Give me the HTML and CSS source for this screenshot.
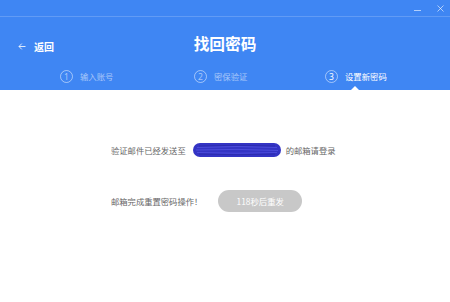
FILE: index.html
```html
<!DOCTYPE html>
<html lang="zh">
<head>
<meta charset="utf-8">
<title>找回密码</title>
<link rel="stylesheet" href="styles.css">
</head>
<body>
<div class="header">
  <div class="titlebar">
    <span class="win-min"></span>
    <svg class="win-close" width="7" height="7" viewBox="0 0 7 7"><path d="M0.5 0.5L6.5 6.5M6.5 0.5L0.5 6.5" stroke="rgba(255,255,255,0.65)" stroke-width="0.9" fill="none"/></svg>
  </div>
  <div class="nav">
    <div class="back">
      <svg class="back-arrow" width="8" height="7" viewBox="0 0 8 7"><path d="M7.5 3.5H1M3.8 0.6L1 3.5L3.8 6.4" stroke="rgba(255,255,255,0.9)" stroke-width="0.9" fill="none"/></svg>
      <span class="back-text">返回</span>
    </div>
    <div class="title">找回密码</div>
    <div></div>
  </div>
  <div class="steps">
    <div class="step"><span class="num">1</span><span class="label">输入账号</span></div>
    <div class="step"><span class="num">2</span><span class="label">密保验证</span></div>
    <div class="step active"><span class="num">3</span><span class="label">设置新密码</span></div>
  </div>
</div>
<div class="content">
  <div class="block">
    <div class="line line1">
      <span>验证邮件已经发送至</span>
      <svg class="mask" width="88" height="14" viewBox="0 0 88 14">
        <rect x="0" y="0" width="88" height="14" rx="7" fill="#3434c4"/>
        <path d="M4 4.5Q44 2.5 84 4.5M3 7Q44 5.5 85 7.5M4 9.5Q44 11 84 9.5" stroke="#5252e0" stroke-width="0.8" fill="none"/>
        <path d="M6 3Q44 1.5 82 3M6 11Q44 12.5 82 11" stroke="#2a2aa8" stroke-width="0.8" fill="none"/>
      </svg>
      <span>的邮箱请登录</span>
    </div>
    <div class="line line2">
      <span>邮箱完成重置密码操作！</span>
      <span class="resend">118秒后重发</span>
    </div>
  </div>
</div>
</body>
</html>
```
FILE: styles.css
```css
* { box-sizing: border-box; }
html, body { margin: 0; padding: 0; }
body {
  width: 450px;
  height: 302px;
  background: #ffffff;
  font-family: "Noto Sans CJK SC", "Microsoft YaHei", sans-serif;
  overflow: hidden;
}
.header {
  background: #3f86f3;
  height: 90px;
  display: flex;
  flex-direction: column;
}
.titlebar {
  height: 17px;
  border-bottom: 1px solid rgba(255,255,255,0.18);
  display: flex;
  justify-content: flex-end;
  align-items: flex-start;
  padding-right: 6px;
}
.win-min {
  width: 7px;
  height: 1px;
  background: rgba(255,255,255,0.6);
  margin-top: 10px;
  margin-right: 16px;
}
.win-close { margin-top: 5px; }
.nav {
  height: 45px;
  display: grid;
  grid-template-columns: 1fr auto 1fr;
}
.back {
  display: flex;
  align-items: center;
  padding-left: 18px;
  padding-top: 22px;
  height: 38px;
  color: #fff;
}
.back-arrow { margin-right: 8px; margin-top: -2px; }
.back-text {
  font-size: 10px;
  font-weight: bold;
  line-height: 14px;
}
.title {
  color: #fff;
  font-size: 15.7px;
  font-weight: bold;
  line-height: 20px;
  padding-top: 17px;
}
.steps {
  height: 28px;
  display: grid;
  grid-template-columns: 134px 131px auto;
  padding-left: 60px;
}
.step {
  display: flex;
  align-items: center;
  position: relative;
  color: rgba(255,255,255,0.55);
}
.num {
  width: 13px;
  height: 13px;
  border: 1px solid rgba(255,255,255,0.5);
  border-radius: 50%;
  font-size: 8.5px;
  line-height: 11px;
  text-align: center;
  margin-right: 7px;
  font-family: "Noto Sans", sans-serif;
}
.label {
  font-size: 8.4px;
  line-height: 12px;
}
.step.active { color: #fff; }
.step.active::after {
  content: "";
  position: absolute;
  bottom: 0;
  left: 26px;
  border-left: 4px solid transparent;
  border-right: 4px solid transparent;
  border-bottom: 4px solid #fff;
}
.content {
  padding-top: 53px;
  padding-left: 111px;
}
.block {
  color: #666;
  font-size: 8.3px;
}
.line {
  display: flex;
  align-items: center;
}
.line1 { height: 14px; }
.mask { margin: 0 5px 0 7px; }
.line2 {
  margin-top: 33px;
  height: 22px;
}
.resend {
  margin-left: 16px;
  width: 84px;
  height: 22px;
  border-radius: 11px;
  background: #c8c8c8;
  color: #fff;
  font-size: 8.4px;
  display: flex;
  align-items: center;
  justify-content: center;
}
```
